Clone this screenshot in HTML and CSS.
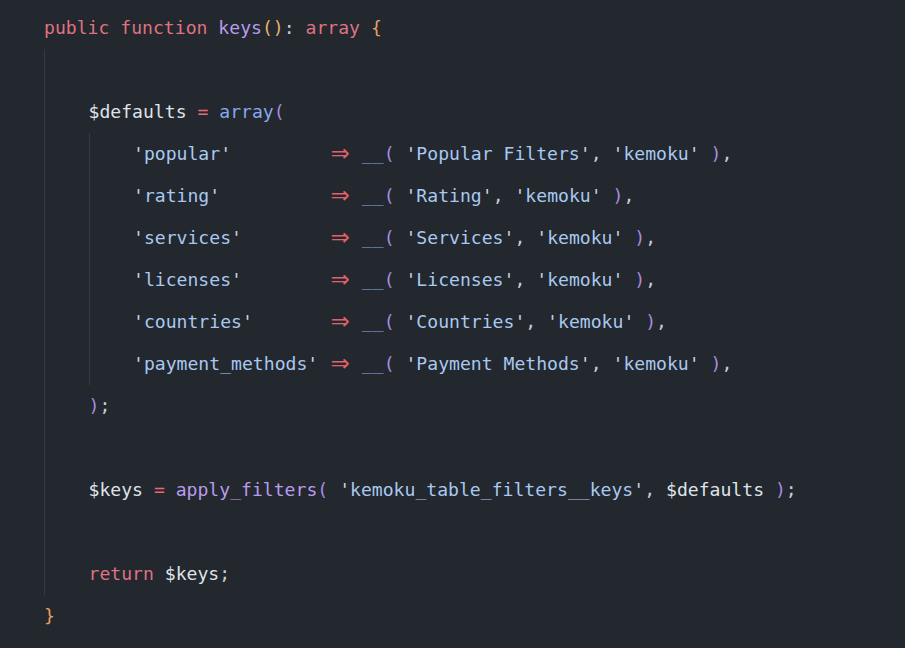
FILE: index.html
```html
<!DOCTYPE html>
<html>
<head>
<meta charset="utf-8">
<link rel="stylesheet" href="styles.css">
</head>
<body>
<div class="code">
  <div class="line"><span class="kw">public</span> <span class="kw">function</span> <span class="fn">keys</span><span class="br">()</span><span class="pn">:</span> <span class="kw">array</span> <span class="cb">{</span></div>
  <div class="block">
    <div class="line"></div>
    <div class="line"><span class="var">$defaults</span> <span class="op">=</span> <span class="bi">array</span><span class="pr">(</span></div>
    <div class="block">
      <div class="line"><span class="q">'</span><span class="str">popular</span><span class="q">'</span>         <span class="arrow">⇒</span> <span class="bi">__</span><span class="pr">(</span> <span class="q">'</span><span class="str">Popular Filters</span><span class="q">'</span><span class="pn">,</span> <span class="q">'</span><span class="str">kemoku</span><span class="q">'</span> <span class="pr">)</span><span class="pn">,</span></div>
      <div class="line"><span class="q">'</span><span class="str">rating</span><span class="q">'</span>          <span class="arrow">⇒</span> <span class="bi">__</span><span class="pr">(</span> <span class="q">'</span><span class="str">Rating</span><span class="q">'</span><span class="pn">,</span> <span class="q">'</span><span class="str">kemoku</span><span class="q">'</span> <span class="pr">)</span><span class="pn">,</span></div>
      <div class="line"><span class="q">'</span><span class="str">services</span><span class="q">'</span>        <span class="arrow">⇒</span> <span class="bi">__</span><span class="pr">(</span> <span class="q">'</span><span class="str">Services</span><span class="q">'</span><span class="pn">,</span> <span class="q">'</span><span class="str">kemoku</span><span class="q">'</span> <span class="pr">)</span><span class="pn">,</span></div>
      <div class="line"><span class="q">'</span><span class="str">licenses</span><span class="q">'</span>        <span class="arrow">⇒</span> <span class="bi">__</span><span class="pr">(</span> <span class="q">'</span><span class="str">Licenses</span><span class="q">'</span><span class="pn">,</span> <span class="q">'</span><span class="str">kemoku</span><span class="q">'</span> <span class="pr">)</span><span class="pn">,</span></div>
      <div class="line"><span class="q">'</span><span class="str">countries</span><span class="q">'</span>       <span class="arrow">⇒</span> <span class="bi">__</span><span class="pr">(</span> <span class="q">'</span><span class="str">Countries</span><span class="q">'</span><span class="pn">,</span> <span class="q">'</span><span class="str">kemoku</span><span class="q">'</span> <span class="pr">)</span><span class="pn">,</span></div>
      <div class="line"><span class="q">'</span><span class="str">payment_methods</span><span class="q">'</span> <span class="arrow">⇒</span> <span class="bi">__</span><span class="pr">(</span> <span class="q">'</span><span class="str">Payment Methods</span><span class="q">'</span><span class="pn">,</span> <span class="q">'</span><span class="str">kemoku</span><span class="q">'</span> <span class="pr">)</span><span class="pn">,</span></div>
    </div>
    <div class="line"><span class="pr">)</span><span class="pn">;</span></div>
    <div class="line"></div>
    <div class="line"><span class="var">$keys</span> <span class="op">=</span> <span class="fn">apply_filters</span><span class="pr">(</span> <span class="q">'</span><span class="str">kemoku_table_filters__keys</span><span class="q">'</span><span class="pn">,</span> <span class="var">$defaults</span> <span class="pr">)</span><span class="pn">;</span></div>
    <div class="line"></div>
    <div class="line"><span class="kw">return</span> <span class="var">$keys</span><span class="pn">;</span></div>
  </div>
  <div class="line"><span class="cb">}</span></div>
</div>
</body>
</html>
```

FILE: styles.css
```css
html, body {
  margin: 0;
  padding: 0;
  background: #23272e;
  width: 905px;
  height: 648px;
  overflow: hidden;
}

.code {
  padding: 7px 0 0 44px;
  font-family: "DejaVu Sans Mono", "Liberation Mono", monospace;
  font-size: 18.1px;
  color: #dde1e8;
}

.line {
  height: 42px;
  line-height: 42px;
  white-space: pre;
}

.block {
  border-left: 1px solid #363a42;
  padding-left: 43.5px;
}

.kw { color: #df7381; }
.fn { color: #b89cec; }
.br { color: #e2b36f; }
.cb { color: #e2a066; }
.pn { color: #c9ced6; }
.var { color: #dfe3ea; }
.op { color: #e06c75; }
.bi { color: #86a9ea; }
.pr { color: #a98be0; }
.q { color: #c8d3e0; }
.str { color: #a9c9f0; }
.arrow {
  display: inline-block;
  width: 21.8px;
  height: 42px;
  vertical-align: top;
  text-align: center;
  color: #e0606b;
  font-family: "DejaVu Sans", sans-serif;
  font-size: 23px;
  line-height: 40px;
  overflow: visible;
}
```
